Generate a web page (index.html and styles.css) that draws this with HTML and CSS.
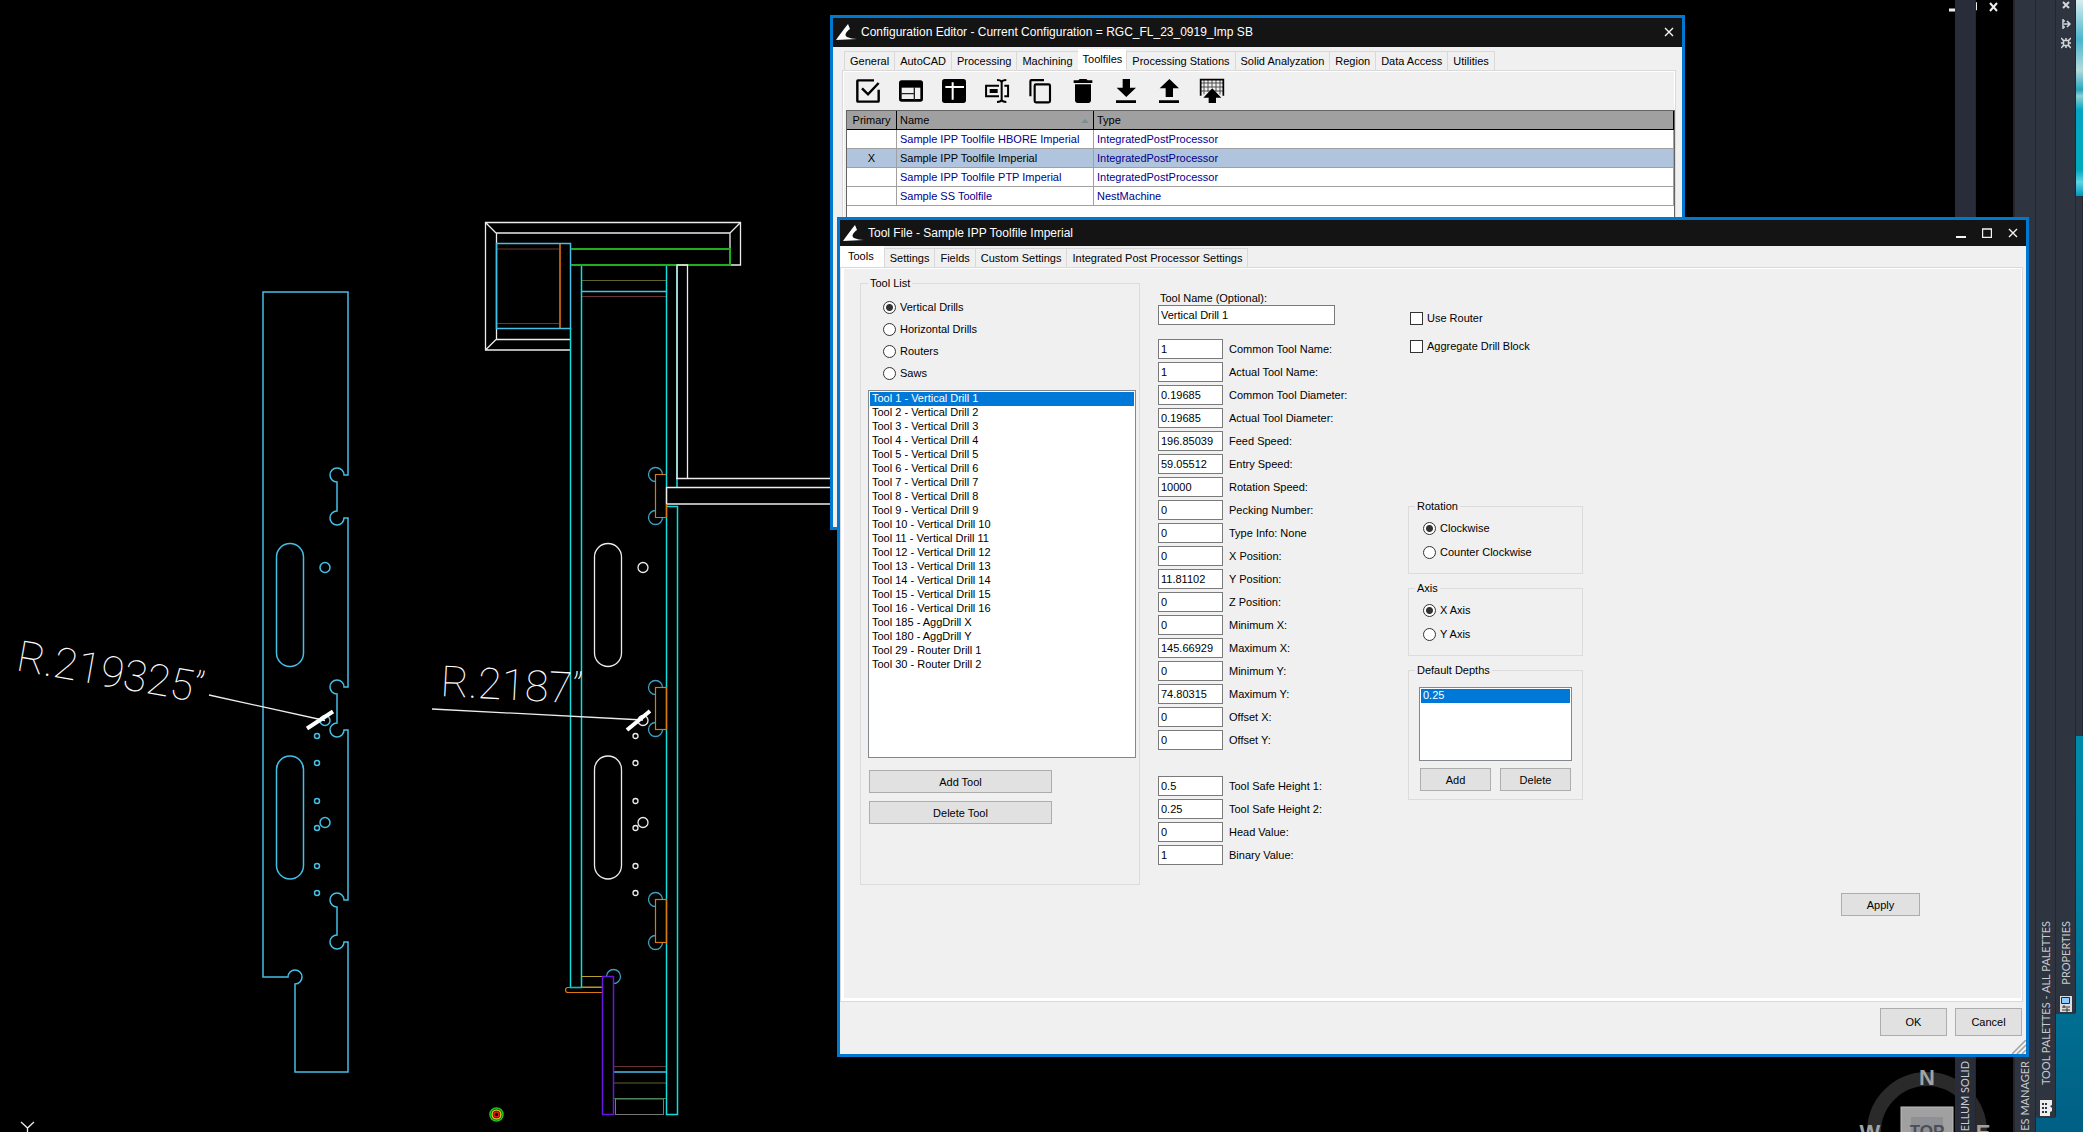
FILE: index.html
```html
<!DOCTYPE html>
<html lang="en">
<head>
<meta charset="utf-8">
<title>Configuration Editor</title>
<link rel="stylesheet" href="styles.css">
</head>
<body>
<main class="desktop">
  <svg class="drawing" aria-label="Cabinet section drawing">
    <g class="blue">
      <path d="M263 292H348V475H344A7 7 0 1 0 337 482V511A7 7 0 1 0 344 518H348V687H344A7 7 0 1 0 337 694V723A7 7 0 1 0 344 730H348V900H344A7 7 0 1 0 337 907V935A7 7 0 1 0 344 942H348V1072H295V984A7 7 0 1 0 288 977H263Z"/>
      <rect x="276.500" y="543.500" width="27" height="123" rx="13.500"/>
      <rect x="276.500" y="756" width="27" height="123" rx="13.500"/>
      <circle cx="325" cy="567.500" r="5"/><circle cx="325" cy="720.500" r="5"/><circle cx="325" cy="822.500" r="5"/>
      <circle cx="317" cy="736" r="2.500"/><circle cx="317" cy="763" r="2.500"/><circle cx="317" cy="801" r="2.500"/><circle cx="317" cy="828" r="2.500"/><circle cx="317" cy="866" r="2.500"/><circle cx="317" cy="893" r="2.500"/>
    </g>
    <g class="brown">
      <path d="M497 249H560M497 323.500H560M582 296.500H666M614 1066.500H666"/>
    </g>
    <path class="white" d="M570 350H485.500V222.500H740.500V265H730M570 339.500H496.500V233H730V249M485.500 222.500L496 233M740.500 222.500L730 233M485.500 350L496 339.500"/>
    <path class="rust" d="M560 243V328"/>
    <rect class="blue" x="496.500" y="243.500" width="74" height="85"/>
    <path class="olive" d="M582 280.500H666M614 1083H666"/>
    <path class="blue" d="M582 291.500H666M614 1072H666"/>
    <path class="cyan" d="M570.500 328V987.500H581.500V265M666.500 265V1114.500H677.500V506.500H666.500M677 488V265"/>
    <path class="green" d="M571 249H730V265H571" />
    <path class="white" d="M677 479V265H687.500V478.500M676 478.500H840M840 487.500H666.500V504H840"/>
    <g class="bluedim">
      <path d="M662.500 474.500A7 7 0 1 0 655.500 481.500M655.500 510.500A7 7 0 1 0 662.500 517.500"/>
      <path d="M662.500 687.500A7 7 0 1 0 655.500 694.500M655.500 722.500A7 7 0 1 0 662.500 729.500"/>
      <path d="M662.500 899.500A7 7 0 1 0 655.500 906.500M655.500 935.500A7 7 0 1 0 662.500 942.500"/>
      <path d="M606.500 976.500A7 7 0 1 1 613.500 983.500"/>
    </g>
    <g class="orange">
      <path d="M666 474.500H655.500V517.500H666.500V504"/>
      <rect x="655.500" y="687.500" width="11" height="42"/>
      <rect x="655.500" y="899.500" width="11" height="43"/>
      <path d="M602.500 987.500H568Q565.500 987.500 565.500 990T568 992.500H602.500"/>
    </g>
    <path class="yellow" d="M582 976.500H602.500V987H582"/>
    <rect class="purple" x="602.500" y="976.500" width="11" height="138"/>
    <path class="green-dim" d="M614 1098.500H666"/>
    <rect class="grey" x="615.500" y="1099" width="48" height="15.500"/>
    <g class="white">
      <rect x="594.500" y="543.500" width="27" height="123" rx="13.500"/>
      <rect x="594.500" y="756" width="27" height="123" rx="13.500"/>
      <circle cx="643" cy="567.500" r="5"/><circle cx="643" cy="720.500" r="5"/><circle cx="643" cy="822.500" r="5"/>
      <circle cx="635.500" cy="736" r="2.500"/><circle cx="635.500" cy="763" r="2.500"/><circle cx="635.500" cy="801" r="2.500"/><circle cx="635.500" cy="828" r="2.500"/><circle cx="635.500" cy="866" r="2.500"/><circle cx="635.500" cy="893" r="2.500"/>
      <path d="M209 695L325 720.500M432 709L643 720M21 1122L27.500 1128L34 1122M27.500 1128V1140"/>
    </g>
    <path class="slash" d="M307 728.500L333 711.500M627 730L650 711"/>
    <text class="dim" transform="translate(15 670) rotate(10)">R.219325”</text>
    <text class="dim" transform="translate(440 696) rotate(3)">R.2187”</text>
    <g class="donut"><circle cx="496.500" cy="1114.500" r="6.500"/><circle class="y" cx="496.500" cy="1114.500" r="4.500"/><circle class="r" cx="496.500" cy="1114.500" r="2.500"/></g>
  </svg>

  <svg class="compass" viewBox="0 0 140 64" aria-label="View cube">
    <circle cx="70" cy="64" r="53" class="ring"/>
    <rect x="44" y="39" width="52" height="52" class="face"/><rect x="54" y="49" width="32" height="32" class="inner"/>
    <text x="70" y="17">N</text><text x="13" y="72">W</text><text x="126" y="72">E</text>
    <text x="70" y="69" class="top">TOP</text>
  </svg>

  <svg class="mdi" viewBox="0 0 50 10" aria-label="Drawing window controls"><path d="M0 8h7" stroke-width="3"/><path d="M20 2.500h6v7h-6z M22 2V.500h5.500V8H26" stroke-width="1"/><path d="M41 1l7 8M48 1l-7 8" stroke-width="2"/></svg>
  <aside class="strip strip-solid"><span>ELLUM SOLID</span></aside>
  <div class="water"></div>
  <aside class="strip strip-manager"><span>ES MANAGER</span></aside>
  <aside class="strip strip-tools"><span>TOOL PALETTES - ALL PALETTES</span>
    <svg width="12" height="16" viewBox="0 0 12 16"><path fill="#eee" d="M0 0h12v5l-2 1 2 2v3l-2 1v4H0z"/><path fill="#2e3440" d="M2 3h2v2H2zM5 3h2v2H5zM2 7h2v2H2zM5 7h2v2H5zM2 11h2v2H2zM5 11h2v2H5z"/></svg>
  </aside>
  <aside class="strip strip-props">
    <svg class="strip-top" width="10" height="50" viewBox="0 0 10 50" fill="none" stroke="#d4d6da" stroke-width="2"><path d="M2 2l6 6M8 2l-6 6"/><path d="M2 19v10M2 21h2M2 27h2M3 24h5M6 21l3 3-3 3" stroke-width="1.500"/><rect x="2.500" y="40.500" width="5" height="5" stroke-width="1.500"/><path d="M0 38l2.500 2.500M10 38l-2.500 2.500M0 48l2.500-2.500M10 48l-2.500-2.500M5 38v2M5 46v2M0 43h2M8 43h2" stroke-width="1.500"/></svg>
    <span>PROPERTIES</span>
    <svg width="12" height="16" viewBox="0 0 12 16"><path fill="#ddd" d="M0 0h12v16H0z"/><path fill="#8ccaff" stroke="#222a38" d="M1.500 1.500h8v6h-8z"/><path stroke="#333" d="M2 11h8M2 14h8M4 9v3M7 12v4"/></svg>
  </aside>
  <aside class="strip strip-edge"></aside>

  <section class="window config">
    <header class="titlebar">
      <svg class="logo" viewBox="0 0 21 16"><path fill="#fff" d="M12 0l2 5c-4 3-6 6-3 8 3 1 6 2 10 2L0 16C4 10 8 5 12 0z"/></svg>
      <h1>Configuration Editor - Current Configuration = RGC_FL_23_0919_Imp SB</h1>
      <button class="wbtn" aria-label="Close"><svg viewBox="0 0 10 10"><path d="M1 1l8 8M9 1L1 9"/></svg></button>
    </header>
    <nav class="tabs">
      <button>General</button><button>AutoCAD</button><button>Processing</button><button>Machining</button><button class="on">Toolfiles</button><button>Processing Stations</button><button>Solid Analyzation</button><button>Region</button><button>Data Access</button><button>Utilities</button>
    </nav>
    <div class="page">
      <div class="toolbar">
        <button aria-label="Select"><svg viewBox="0 0 24 24" fill="none" stroke="#000" stroke-width="1.800"><path d="M16.500 4H4.500Q4 4 4 4.500v15q0 .5.500.5h15q.500 0 .500-.5V11"/><path d="M7.500 10l4.500 4.500 8-8.500"/></svg></button>
        <button aria-label="Edit"><svg viewBox="0 0 24 24"><path fill="none" stroke="#000" stroke-width="2" d="M5 5h14q1 0 1 1v12q0 1-1 1H5q-1 0-1-1V6q0-1 1-1z"/><path d="M4 5h16v4.500H4z"/><path fill="none" stroke="#222" d="M4 14h10M14.500 9v10"/></svg></button>
        <button aria-label="New"><svg viewBox="0 0 24 24"><rect x="3" y="3" width="18" height="18" rx="2"/><path stroke="#fff" stroke-width="1.500" d="M5.500 9h14M11 5.500v13"/></svg></button>
        <button aria-label="Rename"><svg viewBox="0 0 24 24" fill="none" stroke="#000" stroke-width="1.500"><path d="M13.500 8H3.800v8h9.700M17.500 8h2.800v8h-2.800"/><path d="M12 3.800q3 0 3.500 1.500Q16 3.800 19 3.800M12 20.200q3 0 3.500-1.500Q16 20.200 19 20.200M15.500 5v14"/><path d="M6.500 12h6" stroke-width="3"/></svg></button>
        <button aria-label="Copy"><svg viewBox="0 0 24 24" fill="none" stroke="#000" stroke-width="1.600"><path d="M4.800 16V4.500Q4.800 3.800 5.500 3.800H15"/><rect x="8" y="7" width="11.500" height="13.500" rx="1"/></svg></button>
        <button aria-label="Delete"><svg viewBox="0 0 24 24"><path d="M6 19c0 1.100.9 2 2 2h8c1.100 0 2-.9 2-2V7H6v12zM19 4h-3.500l-1-1h-5l-1 1H5v2h14V4z"/></svg></button>
        <button aria-label="Import"><svg viewBox="0 0 24 24"><path d="M19.500 9.500H15V3H9.500v6.500H5l7.200 7zM4.500 19v2h15v-2z"/></svg></button>
        <button aria-label="Export"><svg viewBox="0 0 24 24"><path d="M9.500 16.500H15V10h4.500l-7.200-7L5 10h4.500zM4.500 19v2h15v-2z"/></svg></button>
        <button aria-label="Export grid"><svg viewBox="0 0 24 24"><path fill="none" stroke="#444" stroke-width=".7" d="M3.500 6h17M3.500 9h17M3.500 12h17M6 3.500v11M9 3.500v9M12 3.500v6M15 3.500v9M18 3.500v11"/><path fill="none" stroke="#000" stroke-width="1.300" d="M3.500 15.500v-12h17v12"/><path d="M9.500 21H15v-4h4l-6.800-7L5.500 17h4z"/></svg></button>
      </div>
      <div class="gridbox">
      <table class="grid">
        <colgroup><col class="c1"><col class="c2"><col></colgroup>
        <thead><tr><th>Primary</th><th>Name<i class="sort"></i></th><th>Type</th></tr></thead>
        <tbody>
          <tr><td></td><td>Sample IPP Toolfile HBORE Imperial</td><td>IntegratedPostProcessor</td></tr>
          <tr class="sel"><td>X</td><td>Sample IPP Toolfile Imperial</td><td>IntegratedPostProcessor</td></tr>
          <tr><td></td><td>Sample IPP Toolfile PTP Imperial</td><td>IntegratedPostProcessor</td></tr>
          <tr><td></td><td>Sample SS Toolfile</td><td>NestMachine</td></tr>
        </tbody>
      </table>
      </div>
    </div>
  </section>

  <section class="window toolfile">
    <header class="titlebar">
      <svg class="logo" viewBox="0 0 21 16"><path fill="#fff" d="M12 0l2 5c-4 3-6 6-3 8 3 1 6 2 10 2L0 16C4 10 8 5 12 0z"/></svg>
      <h1>Tool File - Sample IPP Toolfile Imperial</h1>
      <button class="wbtn" aria-label="Minimize"><svg viewBox="0 0 10 10"><path d="M0 9h10" stroke-width="2"/></svg></button>
      <button class="wbtn" aria-label="Maximize"><svg viewBox="0 0 10 10"><path d="M.5 1h9v8.500h-9zM0 1h10"/></svg></button>
      <button class="wbtn" aria-label="Close"><svg viewBox="0 0 10 10"><path d="M1 1l8 8M9 1L1 9"/></svg></button>
    </header>
    <nav class="tabs">
      <button class="on">Tools</button><button>Settings</button><button>Fields</button><button>Custom Settings</button><button>Integrated Post Processor Settings</button>
    </nav>
    <form class="page form" onsubmit="return false">
      <fieldset class="group tool-list">
        <legend>Tool List</legend>
        <label><input type="radio" name="kind" checked>Vertical Drills</label>
        <label><input type="radio" name="kind">Horizontal Drills</label>
        <label><input type="radio" name="kind">Routers</label>
        <label><input type="radio" name="kind">Saws</label>
        <select class="list tools" size="20" aria-label="Tools">
          <option selected>Tool 1 - Vertical Drill 1</option><option>Tool 2 - Vertical Drill 2</option><option>Tool 3 - Vertical Drill 3</option><option>Tool 4 - Vertical Drill 4</option><option>Tool 5 - Vertical Drill 5</option><option>Tool 6 - Vertical Drill 6</option><option>Tool 7 - Vertical Drill 7</option><option>Tool 8 - Vertical Drill 8</option><option>Tool 9 - Vertical Drill 9</option><option>Tool 10 - Vertical Drill 10</option><option>Tool 11 - Vertical Drill 11</option><option>Tool 12 - Vertical Drill 12</option><option>Tool 13 - Vertical Drill 13</option><option>Tool 14 - Vertical Drill 14</option><option>Tool 15 - Vertical Drill 15</option><option>Tool 16 - Vertical Drill 16</option><option>Tool 185 - AggDrill X</option><option>Tool 180 - AggDrill Y</option><option>Tool 29 - Router Drill 1</option><option>Tool 30 - Router Drill 2</option>
        </select>
        <button class="btn">Add Tool</button>
        <button class="btn">Delete Tool</button>
      </fieldset>
      <div class="fields">
        <label class="name">Tool Name (Optional):<input value="Vertical Drill 1"></label>
        <label><input value="1">Common Tool Name:</label>
        <label><input value="1">Actual Tool Name:</label>
        <label><input value="0.19685">Common Tool Diameter:</label>
        <label><input value="0.19685">Actual Tool Diameter:</label>
        <label><input value="196.85039">Feed Speed:</label>
        <label><input value="59.05512">Entry Speed:</label>
        <label><input value="10000">Rotation Speed:</label>
        <label><input value="0">Pecking Number:</label>
        <label><input value="0">Type Info: None</label>
        <label><input value="0">X Position:</label>
        <label><input value="11.81102">Y Position:</label>
        <label><input value="0">Z Position:</label>
        <label><input value="0">Minimum X:</label>
        <label><input value="145.66929">Maximum X:</label>
        <label><input value="0">Minimum Y:</label>
        <label><input value="74.80315">Maximum Y:</label>
        <label><input value="0">Offset X:</label>
        <label><input value="0">Offset Y:</label>
        <label class="spaced"><input value="0.5">Tool Safe Height 1:</label>
        <label><input value="0.25">Tool Safe Height 2:</label>
        <label><input value="0">Head Value:</label>
        <label><input value="1">Binary Value:</label>
      </div>
      <div class="options">
        <div class="checks">
          <label><input type="checkbox">Use Router</label>
          <label><input type="checkbox">Aggregate Drill Block</label>
        </div>
        <fieldset class="group pair"><legend>Rotation</legend>
          <label><input type="radio" name="rot" checked>Clockwise</label>
          <label><input type="radio" name="rot">Counter Clockwise</label>
        </fieldset>
        <fieldset class="group pair"><legend>Axis</legend>
          <label><input type="radio" name="axis" checked>X Axis</label>
          <label><input type="radio" name="axis">Y Axis</label>
        </fieldset>
        <fieldset class="group depths"><legend>Default Depths</legend>
          <select class="list" size="4" aria-label="Default depths"><option selected>0.25</option></select>
          <div class="row"><button class="btn">Add</button><button class="btn">Delete</button></div>
        </fieldset>
      </div>
      <button class="btn apply">Apply</button>
    </form>
    <footer class="actions"><button class="btn">OK</button><button class="btn">Cancel</button></footer>
    <svg class="grip" viewBox="0 0 14 14" stroke="#a0a0a0" stroke-width="1.500"><path d="M0 14L14 0M5 14l9-9M10 14l4-4"/></svg>
  </section>
</main>
</body>
</html>
```
FILE: styles.css
```css
* { box-sizing: border-box; }
body { margin: 0; background: #000; color: #000; font: 11px/14px "Liberation Sans", Arial, sans-serif; }
button, input, select { font: inherit; color: inherit; margin: 0; }
h1 { margin: 0; font: inherit; }
.desktop { position: relative; height: 100vh; overflow: hidden; }

/* drawing */
.drawing { position: absolute; inset: 0; width: 100%; height: 100%; fill: none; }
.blue { stroke: #44bfe6; stroke-width: 1.5; }
.bluedim { stroke: #3aa0c4; stroke-width: 1.3; }
.white { stroke: #ececec; stroke-width: 1.3; }
.cyan { stroke: #10dce0; stroke-width: 1.5; }
.green { stroke: #1fae1f; stroke-width: 2; }
.green-dim { stroke: #2f8f3a; }
.brown { stroke: #6a3434; }
.rust { stroke: #b45a10; stroke-width: 2; }
.olive { stroke: #63622a; }
.orange { stroke: #d87a10; stroke-width: 1.2; }
.yellow { stroke: #b8a030; }
.purple { stroke: #6418e0; stroke-width: 1.5; }
.grey { stroke: #777; }
.slash { stroke: #fff; stroke-width: 4; }
.dim { fill: #fff; font-family: Roboto, "Lato", sans-serif; font-weight: 100; font-size: 43px; }
.donut { stroke: #18c818; stroke-width: 1.6; }
.donut .y { stroke: #d8c020; }
.donut .r { stroke: #e01818; }

.compass { position: absolute; right: 86px; bottom: 0; width: 140px; height: 64px; overflow: hidden; }
.compass text { font: bold 22px "Liberation Sans", Arial, sans-serif; fill: #a2a2a2; text-anchor: middle; }
.compass .ring { fill: none; stroke: #2a2a2a; stroke-width: 14; }
.compass .face { fill: #a0a0a0; stroke: #bbb; }
.compass .inner { fill: #8e9096; }
.compass .top { font-size: 17px; fill: #4c4e54; }
.mdi { position: absolute; right: 84px; top: 2px; width: 50px; height: 10px; fill: none; stroke: #eee; }

/* palettes docked at the right edge */
.strip { position: absolute; top: 0; bottom: 0; width: 20px; background: #2e3440; border-right: 1px solid #222630; color: #c8cacd; font: 11px/20px Lato, "Open Sans", sans-serif; display: flex; flex-direction: column; align-items: center; justify-content: flex-end; gap: 11px; }
.strip span { writing-mode: vertical-rl; transform: rotate(180deg); white-space: nowrap; }
.strip-solid { right: 107px; width: 21px; background: #282d39; padding-bottom: 1px; }
.strip-manager { right: 47px; width: 21px; padding-bottom: 1px; }
.strip-tools { right: 27px; bottom: 14px; border-radius: 0 0 3px 3px; }
.strip-props { right: 7px; width: 21px; bottom: 118px; border-left: 1px solid #222630; border-radius: 0 0 3px 3px; }
.strip-tools, .strip-props { padding-bottom: 2px; }
.strip-tools { gap: 15px; }
.strip-top { position: absolute; left: 5px; top: 0; }
.strip-edge { right: 0; width: 7px; top: 196px; bottom: 396px; }
.water { position: absolute; right: 0; top: 0; bottom: 0; width: 70px; border-left: 2px solid #23262f;
  background: linear-gradient(#d8eef0 0, #4ab4cc 40px, #b4dcdc 70px, #2ba3bd 90px, #8fd2d2 96px, #06a4c4 110px, #0ab 170px, #5fd4e4 182px, #0096b8 196px, #0086a6 860px, #006f92 1010px, #005f84); }

/* windows */
.window { position: absolute; border: 3px solid #0078d0; background: #f0f0f0; display: flex; flex-direction: column; }
.config { left: 830px; top: 15px; width: 855px; height: 515px; }
.toolfile { left: 837px; right: 54px; top: 217px; bottom: 75px; }
.titlebar { flex: none; height: 29px; background: #141414; color: #fff; display: flex; align-items: center; gap: 4px; padding: 0 8px 2px 3px; font-size: 12px; }
.toolfile .titlebar { height: 26px; padding-bottom: 0; }
.logo { width: 21px; height: 16px; }
.titlebar h1 { flex: 1; white-space: nowrap; }
.wbtn { border: 0; background: none; padding: 0; width: 10px; height: 10px; display: block; }
.wbtn + .wbtn { margin-left: 12px; }
.wbtn svg { display: block; width: 10px; height: 10px; fill: none; stroke: #f4f4f4; stroke-width: 1.4; }

.tabs { flex: none; height: 23px; display: flex; align-items: flex-end; padding-left: 11px; }
.tabs button { height: 19px; padding: 0 5px; border: 1px solid #d9d9d9; border-bottom: 0; border-right-width: 0; background: #f0f0f0; white-space: nowrap; }
.tabs button:last-child { border-right-width: 1px; }
.tabs .on { height: 21px; background: #fff; border-color: #fff; padding: 0 4px 3px; }
.page { flex: 1; min-height: 0; border: 1px solid #d9d9d9; box-shadow: inset 0 0 0 1px #fff; }
.config .page { margin: 0 6px 3px 9px; padding: 4px 0 3px 3px; display: flex; flex-direction: column; }
.toolbar { display: flex; gap: 11px; padding: 0 6px 3px; }
.toolbar button { border: 0; background: none; padding: 0; width: 32px; height: 32px; }
.toolbar svg { display: block; width: 32px; height: 32px; }
.gridbox { flex: 1; background: #fff; border: 1px solid #646464; }
.grid { width: 100%; border-collapse: separate; border-spacing: 0; table-layout: fixed; }
.c1 { width: 50px; }
.c2 { width: 197px; }
.grid th, .grid td { height: 19px; padding: 0 3px; border: solid #a0a0a0; border-width: 0 1px 1px 0; text-align: left; font-weight: normal; color: #00008b; white-space: nowrap; }
.grid th { background: #a0a0a0; border-color: #000; color: #000; position: relative; }
.grid tr > :first-child { text-align: center; color: #000; }
.grid .sel td { background: #b0c4de; }
.grid .sel td:nth-child(2) { color: #000; }
.sort { position: absolute; right: 4px; top: 8px; border: solid transparent; border-width: 0 4px 4px; border-bottom-color: #7c8c96; }

.toolfile .tabs { height: 21px; padding-left: 0; }
.toolfile .tabs .on { padding: 0 10px 3px 7px; }
.form { margin: 0 3px 0 0; padding: 8px 0 0 19px; display: flex; align-items: flex-start; box-shadow: inset 3px 1px #fff, inset -1px -3px #fff; }
.group { margin: 0; border: 1px solid #dcdcdc; min-width: 0; }
.group legend { padding: 0 2px; }
.form label { display: flex; align-items: center; white-space: nowrap; }
input[type=radio], input[type=checkbox] { appearance: none; flex: none; width: 13px; height: 13px; margin: 0 4px 0 0; border: 1px solid #333; background: #fff; }
input[type=radio] { border-radius: 50%; }
input[type=radio]:checked { background: radial-gradient(#333 0 3px, #fff 4px); }
.list { appearance: none; display: block; border: 1px solid #828790; border-radius: 0; background: #fff; padding: 1px; overflow: hidden; outline: 0; }
.list option { height: 14px; min-height: 14px; padding: 0 2px; line-height: 14px; }
.list option:checked { background: #0078d7 linear-gradient(#0078d7, #0078d7); color: #fff; }
.btn { height: 23px; padding: 0; border: 1px solid #adadad; background: #e1e1e1; }

.tool-list { width: 280px; height: 609px; padding: 6px 0 0 7px; }
.tool-list label { height: 22px; padding-left: 15px; }
.tools { width: 268px; height: 368px; margin: 6px 0 12px; }
.tool-list .btn { display: block; width: 183px; margin: 0 0 8px 1px; }

.fields { width: 250px; padding: 15px 0 0 18px; display: flex; flex-direction: column; gap: 3px; }
.fields label { height: 20px; }
.fields input { width: 65px; height: 20px; margin-right: 6px; padding: 0 2px; border: 1px solid #7a7a7a; background: #fff; }
.fields .name { height: 34px; flex-direction: column; align-items: flex-start; text-indent: 2px; margin-bottom: 11px; }
.fields .name input { width: 177px; text-indent: 0; }
.fields .spaced { margin-top: 23px; }

.options { width: 193px; padding-left: 18px; }
.options .checks { padding: 28px 0 0 2px; height: 223px; }
.checks label { height: 28px; }
.pair { height: 75px; padding: 3px 0 0 6px; margin-bottom: 7px; }
.pair label { height: 24px; padding-left: 8px; }
.depths { height: 137px; padding: 10px 6px 0; }
.depths .list { width: 153px; height: 74px; margin-left: 4px; }
.row { display: flex; justify-content: space-between; padding: 7px 5px 0; }
.row .btn { width: 71px; }
.apply { width: 79px; align-self: flex-end; margin: 0 102px 85px auto; }
.actions { flex: none; height: 52px; display: flex; justify-content: flex-end; gap: 8px; padding: 6px 4px 0; }
.actions .btn { width: 67px; height: 28px; }
.grip { position: absolute; right: 0; bottom: 0; width: 14px; height: 14px; }
```
